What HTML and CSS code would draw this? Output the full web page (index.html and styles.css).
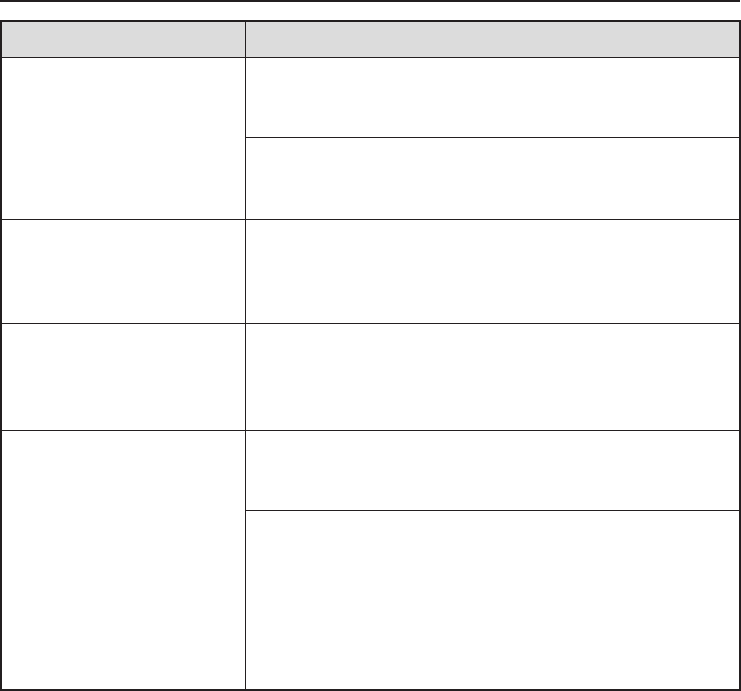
FILE: index.html
```html
<!DOCTYPE html>
<html lang="en">
<head>
<meta charset="utf-8">
<title>Table</title>
<link rel="stylesheet" href="styles.css">
</head>
<body>
<div class="rule"></div>
<div class="table">
  <div class="row head">
    <div class="cell left"></div>
    <div class="cell right"></div>
  </div>
  <div class="row r1">
    <div class="cell left"></div>
    <div class="cell right stack">
      <div class="sub s-a"></div>
      <div class="sub s-b"></div>
    </div>
  </div>
  <div class="row r2">
    <div class="cell left"></div>
    <div class="cell right"></div>
  </div>
  <div class="row r3">
    <div class="cell left"></div>
    <div class="cell right"></div>
  </div>
  <div class="row r4">
    <div class="cell left"></div>
    <div class="cell right stack">
      <div class="sub s-c"></div>
      <div class="sub s-d"></div>
    </div>
  </div>
</div>
</body>
</html>
```
FILE: styles.css
```css
* { box-sizing: border-box; }
html, body { margin: 0; padding: 0; background: #ffffff; }
body { font-family: "Liberation Sans", Arial, sans-serif; width: 741px; }

.rule {
  height: 2px;
  width: 740px;
  background: #231f20;
}

.table {
  margin-top: 18px;
  width: 741px;
  border: 2px solid #231f20;
  display: flex;
  flex-direction: column;
}

.row {
  display: grid;
  grid-template-columns: 243px 1fr;
}
.row + .row { border-top: 1px solid #231f20; }

.cell.right { border-left: 1px solid #231f20; }

.head { height: 35px; background: #dcdcdc; }
.r1 { height: 162px; }
.r2 { height: 104px; }
.r3 { height: 107px; }
.r4 { height: 259px; }

.stack { display: flex; flex-direction: column; }
.sub + .sub { border-top: 1px solid #231f20; }
.s-a { height: 79px; }
.s-b { flex: 1; }
.s-c { height: 79px; }
.s-d { flex: 1; }
```
